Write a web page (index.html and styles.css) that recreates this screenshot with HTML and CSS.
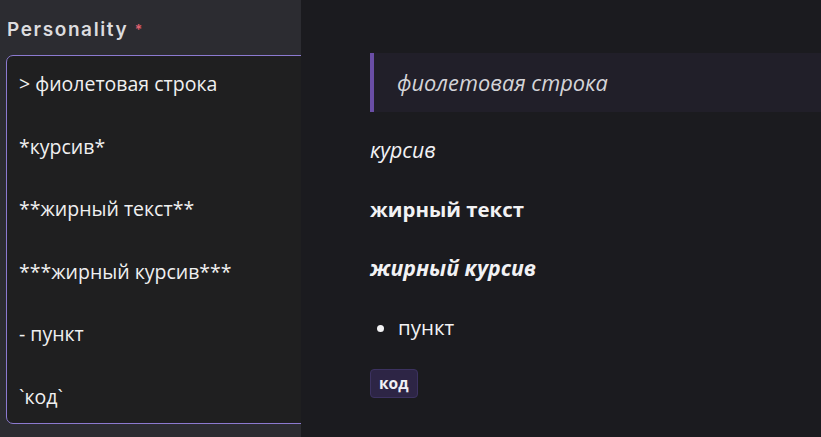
FILE: index.html
```html
<!DOCTYPE html>
<html lang="ru">
<head>
<meta charset="utf-8">
<link rel="stylesheet" href="styles.css">
</head>
<body>
<div class="page">
  <section class="editor">
    <div class="label">Personality <span class="req">*</span></div>
    <div class="field">
      <div class="line">&gt; фиолетовая строка</div>
      <div class="line">*курсив*</div>
      <div class="line">**жирный текст**</div>
      <div class="line">***жирный курсив***</div>
      <div class="line">- пункт</div>
      <div class="line">`код`</div>
    </div>
  </section>
  <section class="preview">
    <blockquote class="quote">фиолетовая строка</blockquote>
    <p class="para italic">курсив</p>
    <p class="para bold">жирный текст</p>
    <p class="para bold italic">жирный курсив</p>
    <ul class="list"><li>пункт</li></ul>
    <code class="code">код</code>
  </section>
</div>
</body>
</html>
```

FILE: styles.css
```css
html, body {
  margin: 0;
  padding: 0;
  background: #1b1b1f;
}
.page {
  display: flex;
  width: 821px;
  height: 437px;
  overflow: hidden;
}
.editor {
  width: 301px;
  flex: none;
  background: #2c2c31;
  overflow: hidden;
  padding: 18px 0 0 6px;
  box-sizing: border-box;
}
.label {
  font-family: Inter, "Noto Sans", sans-serif;
  font-weight: 600;
  font-size: 19px;
  line-height: 24px;
  color: #dcdcdf;
  letter-spacing: 1.6px;
  padding-left: 1px;
}
.req {
  color: #e0606e;
  font-size: 14px;
  vertical-align: top;
  letter-spacing: 0;
}
.field {
  margin-top: 13px;
  width: 320px;
  height: 369px;
  box-sizing: border-box;
  border: 1.5px solid #8c7ad0;
  border-radius: 7px;
  background: #1f1f20;
  padding: 15px 0 0 12px;
  display: flex;
  flex-direction: column;
  gap: 36.5px;
}
.line {
  font-family: "Open Sans", "Noto Sans", sans-serif;
  font-size: 19.5px;
  font-weight: 500;
  line-height: 26px;
  color: #f0f0f0;
}
.preview {
  flex: 1;
  padding: 53px 0 0 69px;
  display: flex;
  flex-direction: column;
  align-items: flex-start;
  font-family: "Open Sans", "Noto Sans", sans-serif;
  color: #f2f2f4;
}
.quote {
  margin: 0 0 25px 0;
  align-self: stretch;
  height: 59px;
  box-sizing: border-box;
  background: #211f29;
  border-left: 4px solid #6a4ea6;
  padding: 0 0 0 23px;
  display: flex;
  align-items: center;
  font-style: italic;
  font-size: 21.8px;
  color: #d4d4d8;
}
.para {
  margin: 0 0 33px 0;
  font-size: 20.4px;
  line-height: 26px;
}
.para.italic { font-size: 21.3px; }
.italic { font-style: italic; }
.bold { font-weight: 700; }
.list {
  margin: 0 0 29px 0;
  padding: 0 0 0 28px;
  font-size: 20.5px;
  line-height: 26px;
}
.code {
  font-family: "Open Sans", "Noto Sans", sans-serif;
  font-weight: 700;
  font-size: 15.5px;
  line-height: 27px;
  padding: 0 8px;
  background: #2d2545;
  border: 1px solid #3c3260;
  border-radius: 4px;
  color: #f0f0f4;
}
```
